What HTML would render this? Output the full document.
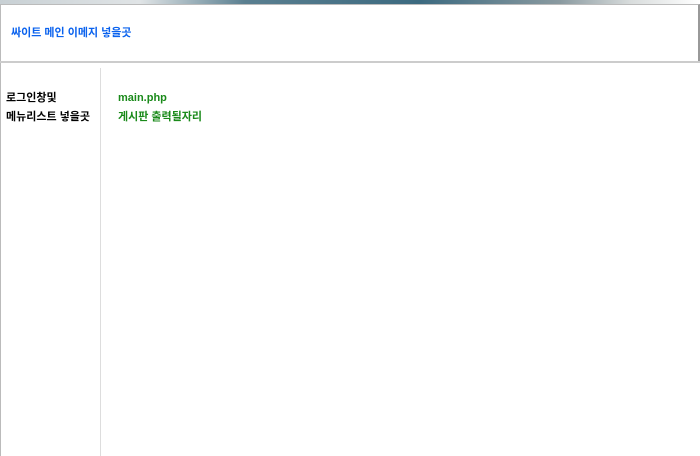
<!DOCTYPE html>
<html><head><meta charset="utf-8"><style>
body{margin:0;width:700px;height:456px;background:#fff;position:relative;overflow:hidden;font-family:"Liberation Sans","Noto Sans CJK KR","NanumGothic",sans-serif;font-size:11px;font-weight:bold}
.band{position:absolute;left:0;top:0;width:700px;height:6px;background:linear-gradient(90deg,#c8d0d4 0,#e0e4e6 20%,#5a7f90 35%,#3c6a80 60%,#8a9aa0 80%,#d8dcdc 90%,#fff 100%)}
.hdr{position:absolute;left:0;top:4px;width:697px;height:56px;background:#fff;border:1px solid #bbb;border-right:2px solid #999}
.line{position:absolute;left:0;top:61px;width:700px;height:2px;background:#ccc}
.lb{position:absolute;left:0;top:63px;width:1px;height:393px;background:#bbb}
.vl{position:absolute;left:100px;top:68px;width:1px;height:388px;background:#ddd}
.t{position:absolute;white-space:nowrap;line-height:13px}
</style></head><body>
<div class="band"></div>
<div class="hdr"></div>
<div class="line"></div>
<div class="lb"></div>
<div class="vl"></div>
<div class="t" style="left:11px;top:27px;color:#0a62ee">싸이트 메인 이메지 넣을곳</div>
<div class="t" style="left:6px;top:92px;color:#000">로그인창및</div>
<div class="t" style="left:6px;top:111px;color:#000">메뉴리스트 넣을곳</div>
<div class="t" style="left:118px;top:92px;color:#1a8a1a">main.php</div>
<div class="t" style="left:118px;top:111px;color:#1a8a1a">게시판 출력될자리</div>
</body></html>
